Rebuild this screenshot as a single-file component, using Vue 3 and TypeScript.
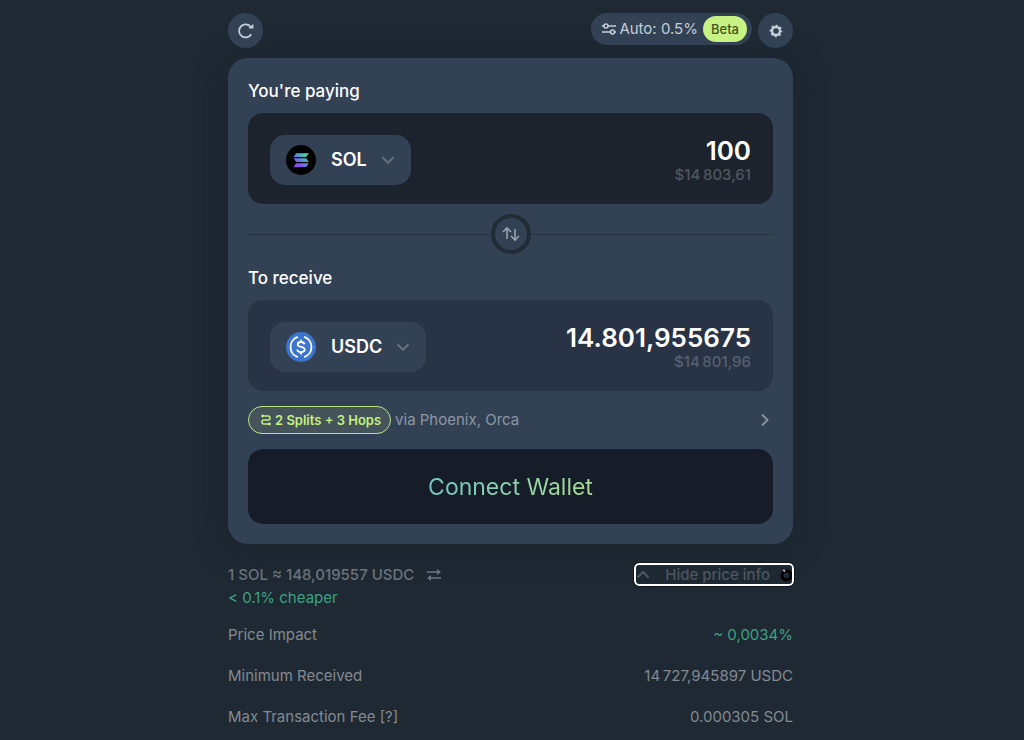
<script setup lang="ts">
import { ref } from 'vue'

interface Detail {
  label: string
  value: string
  positive?: boolean
}

const payAmount = ref('100')
const receiveAmount = ref('14.801,955675')

const details: Detail[] = [
  { label: 'Price Impact', value: '~ 0,0034%', positive: true },
  { label: 'Minimum Received', value: '14\u202f727,945897 USDC' },
  { label: 'Max Transaction Fee [?]', value: '0.000305 SOL' },
]
</script>

<template>
  <main class="page">
    <div class="swap">
      <header class="toolbar">
        <button class="round" type="button" aria-label="Refresh">
          <svg width="18" height="18" viewBox="0 0 18 18" fill="none" stroke="currentColor" stroke-width="1.8">
            <path d="M14.2 12.2A6.500 6.500 0 1 1 13.800 5" />
            <path d="M15.700 2.400v3.400h-3.600" stroke-width="1.400" />
            <path d="M15.800 2.600v3.200h-3.600z" fill="currentColor" stroke="none" />
          </svg>
        </button>
        <div class="tools">
          <button class="slippage" type="button">
            <svg width="14" height="14" viewBox="0 0 14 14" fill="none" stroke="currentColor" stroke-width="1.5">
              <circle cx="4" cy="4" r="2" />
              <circle cx="10.5" cy="10" r="2" />
              <path d="M0 4h2M6 4h8M0 10h8.5M12.500 10H14" />
            </svg>
            <span>Auto: 0.5%</span>
            <span class="beta">Beta</span>
          </button>
          <button class="round" type="button" aria-label="Settings">
            <svg width="14" height="14" viewBox="0 0 14 14" fill="none" stroke="currentColor">
              <circle cx="7" cy="7" r="4" stroke-width="2.4" />
              <circle cx="7" cy="7" r="5.500" stroke-width="1.6" stroke-dasharray="2.160 2.160" stroke-dashoffset="1.080" />
            </svg>
          </button>
        </div>
      </header>

      <section class="card">
        <label class="title" for="pay">You're paying</label>
        <div class="box pay">
          <button class="token" type="button">
            <svg class="coin" width="30" height="30" viewBox="0 0 30 30">
              <defs>
                <linearGradient id="sol" gradientUnits="userSpaceOnUse" x1="9" y1="22" x2="21" y2="8">
                  <stop offset="0" stop-color="#9945ff" />
                  <stop offset="0.25" stop-color="#8752f3" />
                  <stop offset="0.55" stop-color="#5497d5" />
                  <stop offset="0.8" stop-color="#43c4a8" />
                  <stop offset="1" stop-color="#4fe88f" />
                </linearGradient>
              </defs>
              <circle cx="15" cy="15" r="15" fill="#000" />
              <path
                fill="url(#sol)"
                d="M10.200 8.200h12.600L20.200 12H7.600zM7.600 13.200h12.600l2.600 3.800H10.200zM10.200 18.200h12.600L20.200 22H7.600z"
              />
            </svg>
            <span>SOL</span>
            <svg class="chev" width="14" height="14" viewBox="0 0 14 14" fill="none" stroke="currentColor" stroke-width="2">
              <path d="M1.500 4.300 7 9.800l5.500-5.500" />
            </svg>
          </button>
          <div class="amounts">
            <input id="pay" v-model="payAmount" class="amount" type="text" inputmode="decimal" />
            <span class="fiat">$14&#8239;803,61</span>
          </div>
        </div>

        <div class="switch">
          <button class="flip" type="button" aria-label="Swap direction">
            <svg width="18" height="16" viewBox="0 0 18 16" fill="none" stroke="currentColor" stroke-width="1.6">
              <path d="M5 13V2M1 6l4-4 4 4M13 3v11M9 10l4 4 4-4" />
            </svg>
          </button>
        </div>

        <label class="title" for="receive">To receive</label>
        <div class="box receive">
          <button class="token" type="button">
            <svg class="coin" width="30" height="30" viewBox="0 0 30 30" fill="none" stroke="#fff" stroke-width="1.800">
              <circle cx="15" cy="15" r="15" fill="#3c75cb" stroke="none" />
              <path d="M11.900 4.900a10.600 10.600 0 0 0 0 20.200M18.100 4.900a10.600 10.600 0 0 1 0 20.200" />
              <path d="M18.500 12.300c-.3-1.500-1.600-2.300-3.500-2.300-2 0-3.300 1-3.300 2.400 0 3.500 7 1.600 7 5.200 0 1.500-1.500 2.500-3.700 2.500s-3.600-1-3.800-2.600M15 7.700V10M15 20v2.400" />
            </svg>
            <span>USDC</span>
            <svg class="chev" width="14" height="14" viewBox="0 0 14 14" fill="none" stroke="currentColor" stroke-width="2">
              <path d="M1.500 4.300 7 9.800l5.500-5.500" />
            </svg>
          </button>
          <div class="amounts">
            <input id="receive" v-model="receiveAmount" class="amount" type="text" readonly />
            <span class="fiat">$14&#8239;801,96</span>
          </div>
        </div>

        <div class="route">
          <button class="hops" type="button">
            <svg width="10" height="12" viewBox="0 0 10 12" fill="none" stroke="currentColor" stroke-width="1.500">
              <path d="M1.500 2H7a2 2 0 0 1 0 4H3a2 2 0 0 0 0 4h5.500" />
              <circle cx="1.600" cy="2" r="1.400" fill="currentColor" stroke="none" />
              <circle cx="8.400" cy="10" r="1.400" fill="currentColor" stroke="none" />
            </svg>
            <span>2 Splits + 3 Hops</span>
          </button>
          <span class="via">via Phoenix, Orca</span>
          <svg width="16" height="16" viewBox="0 0 16 16" fill="none" stroke="currentColor" stroke-width="1.800">
            <path d="m5 2.500 5.500 5.500L5 13.500" />
          </svg>
        </div>

        <button class="connect" type="button"><span>Connect Wallet</span></button>
      </section>

      <section class="info">
        <div class="summary">
          <div>
            <div class="rate">
              <span>1 SOL ≈ 148,019557 USDC</span>
              <button type="button" aria-label="Invert rate">
                <svg width="14" height="12" viewBox="0 0 14 12" fill="none" stroke="currentColor" stroke-width="1.400">
                  <path d="M0 3h11M14 9H3" />
                  <path d="M10 0l4 3-4 3zM4 6 0 9l4 3z" fill="currentColor" stroke="none" />
                </svg>
              </button>
            </div>
            <div class="cheaper">&lt; 0.1% cheaper</div>
          </div>
          <button class="toggle" type="button">
            <svg width="14" height="14" viewBox="0 0 14 14" fill="none" stroke="currentColor" stroke-width="2">
              <path d="M1.500 9.500 7 4l5.500 5.500" />
            </svg>
            <span>Hide price info</span>
            <svg width="12" height="14" viewBox="0 0 12 14" fill="none">
              <circle cx="6.500" cy="7.500" r="4.500" stroke="#000" stroke-width="3" />
              <path d="M3.400 1.800 4.800 3.600" stroke="#cbd5e1" stroke-width="1.600" />
            </svg>
          </button>
        </div>
        <dl class="details">
          <div v-for="d in details" :key="d.label" class="row">
            <dt>{{ d.label }}</dt>
            <dd :class="{ positive: d.positive }">{{ d.value }}</dd>
          </div>
        </dl>
      </section>
    </div>
  </main>
</template>

<style>
body {
  background: #1e2933;
}
</style>

<style scoped>
.page {
  box-sizing: border-box;
  min-height: 100vh;
  padding: 13px 3px 0 0;
  background: #1e2933;
  color: #848a92;
  font-family: Inter, 'Liberation Sans', sans-serif;
  font-size: 15px;
  line-height: 20px;
}
.swap {
  max-width: 565px;
  margin: 0 auto;
}
button,
input {
  margin: 0;
  padding: 0;
  border: 0;
  background: none;
  color: inherit;
  font: inherit;
}
button {
  cursor: pointer;
}
svg {
  display: block;
  flex: none;
}
.toolbar,
.tools,
.slippage,
.token,
.route,
.hops,
.rate,
.summary,
.toggle,
.row {
  display: flex;
  align-items: center;
}
.toolbar {
  justify-content: space-between;
  margin-bottom: 10px;
  color: #c3ced9;
}
.tools {
  align-items: flex-start;
  gap: 6px;
}
.round {
  display: grid;
  place-items: center;
  width: 35px;
  height: 35px;
  border-radius: 50%;
  background: #334155;
}
.slippage {
  gap: 3px;
  height: 32px;
  padding: 0 5px 0 11px;
  border-radius: 16px;
  background: #334155;
}
.beta {
  margin-left: 2px;
  padding: 3px 8px;
  border-radius: 13px;
  background: #c9f284;
  color: #47561f;
  font-size: 13px;
  font-weight: 500;
}
.card {
  padding: 20px;
  border-radius: 20px;
  background: #334155;
  box-shadow: 0 2px 30px rgba(27, 32, 42, 0.5);
}
.title {
  display: block;
  margin-bottom: 9px;
  color: #fff;
  font-size: 17px;
  font-weight: 500;
  line-height: 26px;
}
.box {
  display: flex;
  align-items: center;
  justify-content: space-between;
  box-sizing: border-box;
  min-height: 91px;
  padding: 22px 22px 19px;
  border-radius: 15px;
}
.pay {
  background: #1c232c;
}
.receive {
  background: #283345;
}
.token {
  height: 50px;
  padding: 0 16px;
  border-radius: 15px;
  background: #334155;
  color: #fff;
  font-size: 18px;
  font-weight: 600;
}
.coin {
  margin-right: 15px;
}
.chev {
  margin-left: 14px;
  color: #66717f;
}
.amounts {
  display: flex;
  flex: 1;
  flex-direction: column;
  min-width: 0;
  margin-left: 20px;
  text-align: right;
}
.amount {
  width: 100%;
  height: 30px;
  outline: none;
  color: #fff;
  font-size: 26px;
  font-weight: 600;
  text-align: right;
}
.fiat {
  color: #4f565e;
  font-weight: 500;
}
.receive .fiat {
  color: #566070;
}
.switch {
  display: flex;
  align-items: center;
  margin: 10px 0 11px;
}
.switch::before,
.switch::after {
  flex: 1;
  height: 1px;
  background: #27333f;
  content: '';
}
.flip {
  display: grid;
  place-items: center;
  box-sizing: border-box;
  width: 40px;
  height: 40px;
  border: 4px solid #212c37;
  border-radius: 50%;
  color: #99a1ac;
}
.route {
  gap: 4px;
  margin: 15px 0;
  color: #8d96a3;
}
.via {
  flex: 1;
}
.hops {
  gap: 4px;
  box-sizing: border-box;
  height: 28px;
  padding: 0 9px 0 12px;
  border: 1px solid #b9e47c;
  border-radius: 14px;
  background: #44545a;
  color: #c4f07f;
  font-size: 13px;
  font-weight: 600;
}
.connect {
  display: block;
  width: 100%;
  height: 75px;
  border-radius: 15px;
  background: #161d28;
  font-size: 23px;
  line-height: 30px;
}
.connect span {
  background: linear-gradient(90deg, #72c8c6, #a9dc93);
  background-clip: text;
  color: transparent;
}
.info {
  padding-top: 19px;
}
.summary {
  align-items: flex-start;
  justify-content: space-between;
}
.rate {
  gap: 13px;
  height: 23px;
  color: #6b737c;
  font-weight: 500;
}
.cheaper {
  line-height: 23px;
}
.cheaper,
.positive {
  color: #3fa283;
}
.toggle {
  box-sizing: border-box;
  height: 23px;
  margin-right: -1px;
  border: 2px solid #fff;
  border-radius: 5px;
  outline: 1px solid #10161d;
  color: #4c5660;
  font-weight: 500;
}
.toggle span {
  margin: 0 10px 0 15px;
}
.details {
  display: grid;
  gap: 21px;
  margin: 16px 0 0;
}
.row {
  justify-content: space-between;
}
dd {
  margin: 0;
}
</style>
